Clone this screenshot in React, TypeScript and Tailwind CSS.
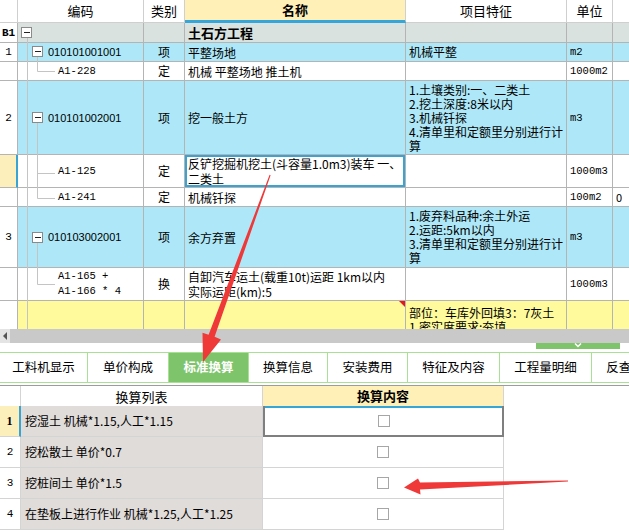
import React from 'react';

const cols = 'grid grid-cols-[18px_126px_41px_221px_161px_46px_16px]';
const cell = 'border-r border-b border-[#b4b4b4]';

type Row = {
  h: string;
  bg: string;
  num?: string;
  numBold?: boolean;
  code?: string[];
  sub?: boolean;
  kind?: string;
  name?: string[];
  bold?: boolean;
  feat?: string[];
  unit?: string;
  extra?: string;
  active?: boolean;
  flag?: boolean;
};

const rows: Row[] = [
  { h: 'h-[20px]', bg: 'bg-[#d9e2de]', num: 'B1', numBold: true, name: ['土石方工程'], bold: true },
  { h: 'h-[19px]', bg: 'bg-[#aee8f8]', num: '1', code: ['010101001001'], kind: '项', name: ['平整场地'], feat: ['机械平整'], unit: 'm2' },
  { h: 'h-[19px]', bg: 'bg-white', code: ['A1-228'], sub: true, kind: '定', name: ['机械 平整场地 推土机'], unit: '1000m2' },
  {
    h: 'h-[74px]', bg: 'bg-[#aee8f8]', num: '2', code: ['010101002001'], kind: '项', name: ['挖一般土方'],
    feat: ['1.土壤类别:一、二类土', '2.挖土深度:8米以内', '3.机械钎探', '4.清单里和定额里分别进行计', '算'], unit: 'm3',
  },
  { h: 'h-[33px]', bg: 'bg-white', code: ['A1-125'], sub: true, kind: '定', name: ['反铲挖掘机挖土(斗容量1.0m3)装车 一、', '二类土'], unit: '1000m3', active: true },
  { h: 'h-[19px]', bg: 'bg-white', code: ['A1-241'], sub: true, kind: '定', name: ['机械钎探'], unit: '100m2', extra: '0' },
  {
    h: 'h-[61px]', bg: 'bg-[#aee8f8]', num: '3', code: ['010103002001'], kind: '项', name: ['余方弃置'],
    feat: ['1.废弃料品种:余土外运', '2.运距:5km以内', '3.清单里和定额里分别进行计', '算'], unit: 'm3',
  },
  { h: 'h-[33px]', bg: 'bg-white', code: ['A1-165 +', 'A1-166 * 4'], sub: true, kind: '换', name: ['自卸汽车运土(载重10t)运距 1km以内', '实际运距(km):5'], unit: '1000m3' },
  { h: 'h-[38px]', bg: 'bg-[#fffb9c]', feat: ['部位：车库外回填3：7灰土', '1.密实度要求:夯填'], flag: true },
];

const tabs = [
  { t: '工料机显示', w: 'w-[88px]' },
  { t: '单价构成', w: 'w-[81px]' },
  { t: '标准换算', w: 'w-[80px]', on: true },
  { t: '换算信息', w: 'w-[79px]' },
  { t: '安装费用', w: 'w-[80px]' },
  { t: '特征及内容', w: 'w-[92px]' },
  { t: '工程量明细', w: 'w-[92px]' },
  { t: '反查工程量', w: 'w-[92px]' },
];

const rules = [
  '挖湿土 机械*1.15,人工*1.15',
  '挖松散土 单价*0.7',
  '挖桩间土 单价*1.5',
  '在垫板上进行作业 机械*1.25,人工*1.25',
];

function Box({ x, y }: { x: number; y: number }) {
  return (
    <g>
      <rect x={x + 0.5} y={y + 0.5} width={10} height={10} fill="#fff" stroke="#8a8a8a" />
      <line x1={x + 3} y1={y + 5.5} x2={x + 9} y2={y + 5.5} stroke="#222" />
    </g>
  );
}

function App() {
  return (
    <div className="relative w-[629px] h-[531px] overflow-hidden bg-white text-black font-['Noto_Sans_CJK_SC','Liberation_Sans',sans-serif] text-[12px]">
      {/* upper grid */}
      <div className="relative h-[329px] overflow-hidden">
        <div className={`${cols} h-[23px] text-[13px]`}>
          <div className="border-r border-b border-[#cfcfcf]" />
          <div className="border-r border-b border-[#cfcfcf] flex items-center justify-center">编码</div>
          <div className="border-r border-b border-[#cfcfcf] flex items-center justify-center">类别</div>
          <div className="bg-[#fff0b8] border-r border-[#cfcfcf] border-b-[3px] border-b-[#36a6d8] flex items-center justify-center font-bold">名称</div>
          <div className="border-r border-b border-[#cfcfcf] flex items-center justify-center">项目特征</div>
          <div className="border-r border-b border-[#cfcfcf] flex items-center justify-center">单位</div>
          <div className="border-b border-[#cfcfcf]" />
        </div>

        {rows.map((r, i) => (
          <div key={i} className={`${cols} ${r.h} leading-[14px]`}>
            <div
              className={
                r.active
                  ? 'bg-[#fdefbb] border-b border-[#b4b4b4] border-r-2 border-r-[#38a4d4]'
                  : `${cell} bg-white flex items-center justify-center font-['Liberation_Mono',monospace] text-[11px] ${r.numBold ? 'font-bold' : ''}`
              }
            >
              {r.num}
            </div>
            <div className={`${cell} ${r.bg} flex flex-col justify-center ${r.sub ? "pl-[40px] font-['Liberation_Mono',monospace] text-[10.5px] leading-[15px]" : "pl-[30px] font-['Liberation_Sans',sans-serif] text-[11px]"}`}>
              {r.code?.map((c) => <div key={c} className="whitespace-pre">{c}</div>)}
            </div>
            <div className={`${cell} ${r.bg} flex items-center justify-center`}>{r.kind}</div>
            <div className={`${cell} ${r.bg} relative flex flex-col justify-center pl-[3px] leading-[15px] ${r.bold ? 'font-bold text-[13px]' : ''} ${r.active ? 'ring-2 ring-inset ring-[#3aa3d2]' : ''}`}>
              {r.name?.map((n) => <div key={n} className="whitespace-pre">{n}</div>)}
              {r.flag && <div className="absolute top-0 right-0 w-0 h-0 border-t-[6px] border-t-[#e8141b] border-l-[6px] border-l-transparent" />}
            </div>
            <div className={`${cell} ${r.bg} flex flex-col justify-center pl-[3px]`}>
              {r.feat?.map((f) => <div key={f} className="whitespace-pre">{f}</div>)}
            </div>
            <div className={`${cell} ${r.bg} flex items-center pl-[3px] font-['Liberation_Mono',monospace] text-[10.5px]`}>{r.unit}</div>
            <div className={`border-b border-[#b4b4b4] ${r.bg} flex items-center pl-[3px] text-[11px] overflow-hidden`}>{r.extra}</div>
          </div>
        ))}

        {/* tree lines */}
        <svg className="absolute left-0 top-0 pointer-events-none" width="629" height="329">
          <g stroke="#c4c4c4" strokeWidth="1" fill="none">
            <line x1="27.5" y1="38" x2="27.5" y2="329" />
            <line x1="37.5" y1="57" x2="37.5" y2="71.5" />
            <line x1="37.5" y1="71.5" x2="55" y2="71.5" />
            <line x1="37.5" y1="123" x2="37.5" y2="198.5" />
            <line x1="37.5" y1="173.5" x2="55" y2="173.5" />
            <line x1="37.5" y1="198.5" x2="55" y2="198.5" />
            <line x1="37.5" y1="243" x2="37.5" y2="284.5" />
            <line x1="37.5" y1="284.5" x2="55" y2="284.5" />
          </g>
          <Box x={21} y={27} />
          <Box x={32} y={46} />
          <Box x={32} y={112} />
          <Box x={32} y={232} />
        </svg>
      </div>

      {/* horizontal scrollbar */}
      <div className="flex h-[14px] bg-[#c9c9c9]">
        <div className="w-[10px] bg-[#e4e4e4] flex items-center justify-center">
          <div className="w-0 h-0 border-y-[4px] border-y-transparent border-r-[4px] border-r-[#555]" />
        </div>
      </div>

      {/* splitter handle */}
      <div className="h-[9px] flex">
        <div className="ml-[536px] w-[84px] h-[6px] bg-[#7ec46b] flex justify-center">
          <svg width="10" height="6" viewBox="0 0 10 6">
            <path d="M2 0.5 L5 3.5 L8 0.5" stroke="#fff" strokeWidth="1.5" fill="none" />
          </svg>
        </div>
      </div>

      {/* tabs */}
      <div className="flex h-[31px] border-y border-[#a8e094] overflow-hidden text-[12.5px]">
        {tabs.map((t) => (
          <div
            key={t.t}
            className={`${t.w} shrink-0 flex items-center justify-center border-r border-[#a8e094] ${t.on ? 'bg-[#7ec46b] text-white font-bold' : ''}`}
          >
            {t.t}
          </div>
        ))}
      </div>

      {/* bottom grid */}
      <div className="mt-[2px] border-t border-[#9c9c9c]">
        <div className="grid grid-cols-[21px_242px_241px] h-[20px] text-[13px]">
          <div className="border-r border-[#d4d4d4]" />
          <div className="border-r border-[#d4d4d4] flex items-center justify-center">换算列表</div>
          <div className="bg-[#fff0b8] border-r border-[#d4d4d4] border-b-2 border-b-[#36a6d8] flex items-center justify-center font-bold">换算内容</div>
        </div>
        {rules.map((t, i) => (
          <div key={t} className="grid grid-cols-[21px_242px_241px] h-[31px]">
            <div
              className={
                i === 0
                  ? 'bg-[#fdefbb] border-b border-[#d4d4d4] border-r-2 border-r-[#38a4d4] flex items-center justify-center font-bold font-["Liberation_Serif",serif]'
                  : "border-r border-b border-[#d4d4d4] flex items-center justify-center text-[11px] font-['Liberation_Mono',monospace]"
              }
            >
              {i + 1}
            </div>
            <div className="bg-[#e0dcd9] border-r border-b border-[#d4d4d4] flex items-center pl-[4px] whitespace-pre">{t}</div>
            <div
              className={
                i === 0
                  ? 'border-2 border-t-0 border-[#7f7f7f] flex items-center justify-center'
                  : 'border-r border-b border-[#d4d4d4] flex items-center justify-center'
              }
            >
              <div className="w-[12px] h-[12px] border border-[#a6a6a6] bg-white" />
            </div>
          </div>
        ))}
      </div>

      {/* annotation arrows */}
      <svg className="absolute left-0 top-0 pointer-events-none" width="629" height="531">
        <polygon
          points="270.6,175.2 214.6,336.8 221,339.5 203,362 202.5,332.8 208.6,334.8 269.6,174.8"
          fill="#ef3838"
        />
        <polygon
          points="568,480.6 420,482.4 418,478.5 404,487.5 420.5,494.5 420,489.6 568,481.6"
          fill="#ef3838"
        />
      </svg>
    </div>
  );
}

export default App;
